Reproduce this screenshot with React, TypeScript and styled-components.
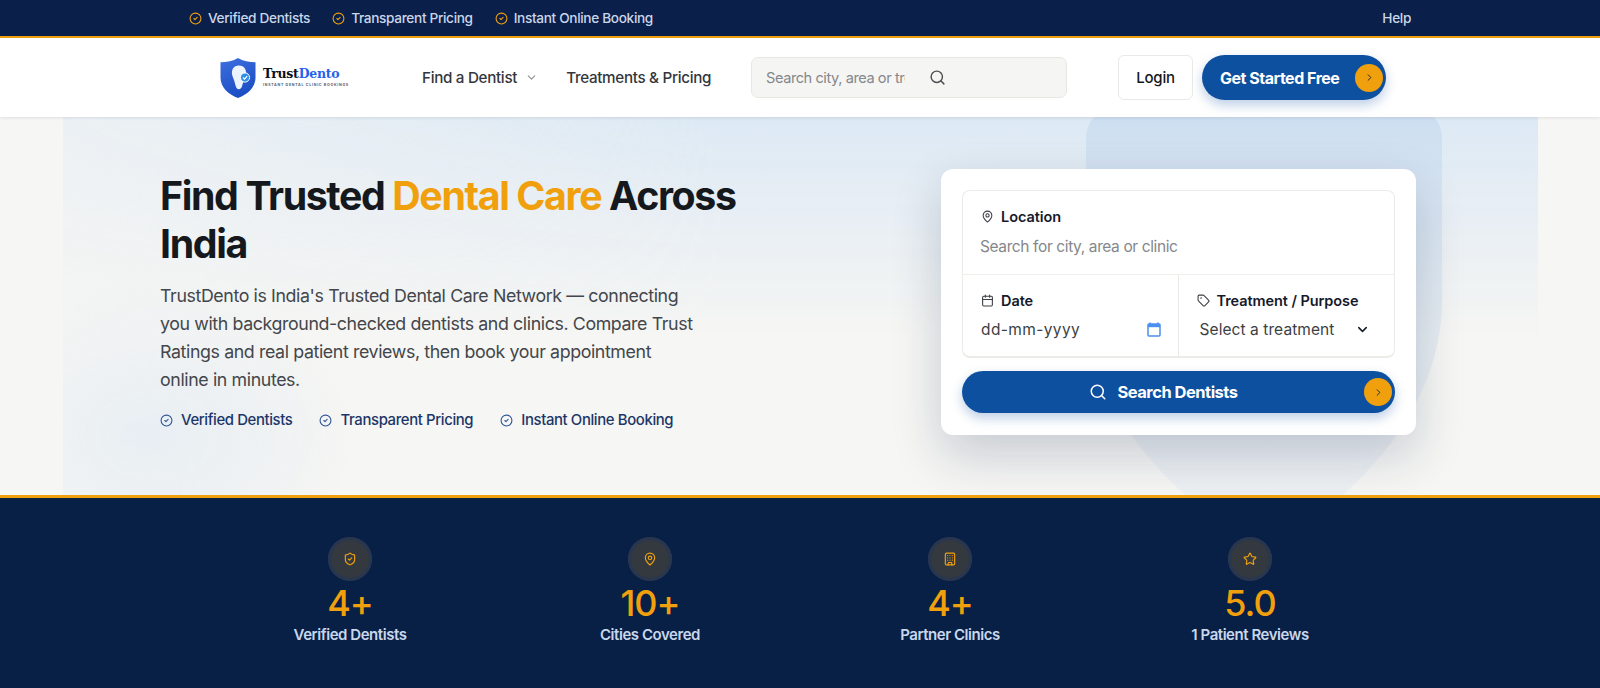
import React from "react";
import styled, { createGlobalStyle } from "styled-components";
import {
  Building,
  Calendar,
  ChevronDown,
  ChevronRight,
  CircleCheck,
  MapPin,
  Search,
  ShieldCheck,
  Star,
  Tag,
} from "lucide-react";

const NAVY = "#0a1f49";
const BLUE = "#0e50a0";
const AMBER = "#f0a00c";

const GlobalStyle = createGlobalStyle`
  html, body { margin: 0; padding: 0; background: #fff; }
  * { box-sizing: border-box; }
  body { font-family: Inter, "Liberation Sans", sans-serif; }
`;

const Page = styled.div`
  width: 1600px;
  height: 688px;
  overflow: hidden;
`;

const TopBar = styled.div`
  height: 38px;
  background: ${NAVY};
  border-bottom: 2px solid ${AMBER};
  padding: 0 189px;
  display: flex;
  align-items: center;
  justify-content: space-between;
  color: #c9d6ea;
  font-size: 13.65px;
  font-weight: 500;
  letter-spacing: -0.025em;
`;

const TopList = styled.div`
  display: flex;
  gap: 22px;
`;

const TopItem = styled.span`
  display: flex;
  align-items: center;
  gap: 6px;
  svg { color: ${AMBER}; }
`;

const Header = styled.header`
  position: relative;
  z-index: 2;
  height: 79px;
  background: #fff;
  box-shadow: 0 1px 3px rgba(20, 30, 60, 0.1);
  padding: 0 214px 0 220px;
  display: flex;
  align-items: center;
`;

const Logo = styled.div`
  display: flex;
  align-items: center;
  gap: 7px;
  width: 202px;
`;

const WordBlock = styled.div`
  display: flex;
  flex-direction: column;
  gap: 2px;
`;

const Word = styled.div`
  font-family: "DejaVu Serif", serif;
  font-weight: 700;
  font-size: 12.5px;
  line-height: 14px;
  letter-spacing: -0.02em;
  color: #0c0f1a;
  span { color: #2563eb; }
`;

const Tagline = styled.div`
  font-size: 3.6px;
  line-height: 5px;
  font-weight: 700;
  letter-spacing: 0.2em;
  color: #555c6e;
  white-space: nowrap;
`;

const NavLinks = styled.nav`
  display: flex;
  align-items: center;
  gap: 28px;
  width: 329px;
  font-size: 15.2px;
  font-weight: 450;
  letter-spacing: -0.02em;
  color: #33363c;
`;

const NavLink = styled.a`
  display: flex;
  align-items: center;
  gap: 8px;
  svg { color: #8d9097; }
`;

const NavSearch = styled.div`
  width: 316px;
  height: 41px;
  background: #f5f5f3;
  border: 1px solid #e8e8e3;
  border-radius: 7px;
  padding: 0 14px;
  display: flex;
  align-items: center;
  gap: 24px;
  color: #4b4d50;
`;

const NavSearchInput = styled.input`
  width: 139px;
  border: 0;
  outline: 0;
  padding: 0;
  background: none;
  font: 400 14.6px Inter, sans-serif;
  letter-spacing: -0.03em;
  &::placeholder { color: #85878a; opacity: 1; }
`;

const HeaderActions = styled.div`
  margin-left: auto;
  display: flex;
  gap: 9px;
`;

const LoginButton = styled.button`
  width: 75px;
  height: 45px;
  background: #fff;
  border: 1px solid #e9e9e6;
  border-radius: 6px;
  font: 500 15px Inter, sans-serif;
  letter-spacing: -0.015em;
  color: #15171c;
`;

const PillButton = styled.button<{ $full?: boolean }>`
  position: relative;
  width: ${(p) => (p.$full ? "100%" : "184px")};
  height: ${(p) => (p.$full ? "42px" : "45px")};
  border: 0;
  border-radius: 24px;
  background: ${BLUE};
  color: #fff;
  box-shadow: 0 5px 12px rgba(14, 80, 160, 0.28);
  font: 700 ${(p) => (p.$full ? "16.5px" : "16px")} Inter, sans-serif;
  letter-spacing: -0.03em;
  display: flex;
  align-items: center;
  justify-content: ${(p) => (p.$full ? "center" : "flex-start")};
  gap: 10px;
  padding: ${(p) => (p.$full ? "0 30px 0 0" : "0 0 0 18px")};
`;

const ArrowDot = styled.span`
  position: absolute;
  right: 3px;
  top: 50%;
  transform: translateY(-50%);
  width: 28px;
  height: 28px;
  border-radius: 50%;
  background: ${AMBER};
  color: #1a2030;
  display: flex;
  align-items: center;
  justify-content: center;
`;

const Hero = styled.section`
  position: relative;
  height: 378px;
  background: #f6f6f4;
  padding: 52px 184px 0 160px;
  display: flex;
  justify-content: space-between;
  overflow: hidden;

  &::before {
    content: "";
    position: absolute;
    top: 0;
    bottom: 0;
    left: 63px;
    width: 1475px;
    background:
      radial-gradient(300px 220px at 5% 84%, rgba(198, 220, 243, 0.6), transparent 72%),
      linear-gradient(180deg, rgba(196, 220, 245, 0.5), rgba(196, 220, 245, 0) 58%);
    mask-image: linear-gradient(90deg, rgba(0, 0, 0, 0.4), #000 45%);
  }
`;

const HeroShield = styled.svg`
  position: absolute;
  left: 1086px;
  top: -7px;
  width: 356px;
  height: 440px;
`;

const HeroCopy = styled.div`
  position: relative;
  width: 600px;
  padding-top: 3px;
`;

const Title = styled.h1`
  margin: 0 0 14px;
  font-size: 39.3px;
  line-height: 48px;
  font-weight: 700;
  letter-spacing: -0.035em;
  color: #15181c;
  em { font-style: normal; color: ${AMBER}; }
`;

const Lead = styled.p`
  margin: 0 0 17px;
  width: 538px;
  font-size: 17.8px;
  line-height: 28px;
  letter-spacing: -0.022em;
  color: #43464b;
`;

const Perks = styled.div`
  display: flex;
  gap: 27px;
  font-size: 14.9px;
  font-weight: 500;
  letter-spacing: -0.025em;
  color: #1c3669;
`;

const Perk = styled.span`
  display: flex;
  align-items: center;
  gap: 8px;
  svg { color: #2f5597; }
`;

const BookingCard = styled.form`
  position: relative;
  width: 475px;
  height: 266px;
  background: #fff;
  border-radius: 12px;
  padding: 21px;
  box-shadow: 0 20px 50px rgba(12, 32, 70, 0.2);
`;

const Fields = styled.div`
  height: 168px;
  border: 1px solid #ebebe8;
  border-bottom-width: 2px;
  border-radius: 8px;
  margin-bottom: 13px;
  display: grid;
  grid-template-columns: 1fr 1fr;
  grid-template-rows: 84px 1fr;
`;

const Field = styled.div<{ $wide?: boolean; $divided?: boolean }>`
  grid-column: ${(p) => (p.$wide ? "1 / 3" : "auto")};
  padding: 15px 17px 0;
  border-bottom: ${(p) => (p.$wide ? "1.5px solid #efefec" : "0")};
  border-right: ${(p) => (p.$divided ? "1px solid #ebebe8" : "0")};
`;

const FieldLabel = styled.label`
  display: flex;
  align-items: center;
  gap: 7px;
  height: 20px;
  margin-bottom: 8px;
  font-size: 14.5px;
  font-weight: 600;
  letter-spacing: -0.005em;
  color: #15192a;
  svg { color: #3b3e44; margin-left: 1px; }
`;

const FieldInput = styled.input`
  width: 100%;
  margin-top: 2px;
  border: 0;
  outline: 0;
  padding: 0;
  background: none;
  font: 400 15.5px Inter, sans-serif;
  letter-spacing: -0.025em;
  line-height: 22px;
  &::placeholder { color: #85878a; opacity: 1; }
`;

const FieldValue = styled.div<{ $indent?: number; $spaced?: boolean }>`
  display: flex;
  align-items: center;
  justify-content: space-between;
  height: 22px;
  padding: 0 ${(p) => (p.$spaced ? "0" : "7px")} 0 ${(p) => p.$indent ?? 1}px;
  font-size: 15.5px;
  letter-spacing: ${(p) => (p.$spaced ? "0.025em" : "0.005em")};
  color: #3c3f44;
`;

const Stats = styled.section`
  height: 193px;
  background: #081f46;
  border-top: 3px solid ${AMBER};
  padding: 39px 200px 0;
  display: grid;
  grid-template-columns: repeat(4, 1fr);
  align-items: start;
`;

const Stat = styled.div`
  display: flex;
  flex-direction: column;
  align-items: center;
`;

const StatIcon = styled.span`
  width: 44px;
  height: 44px;
  border-radius: 50%;
  background: #33393f;
  box-shadow: inset 0 0 0 3px #283650;
  color: ${AMBER};
  display: flex;
  align-items: center;
  justify-content: center;
`;

const StatValue = styled.div`
  font-size: 36px;
  line-height: 44px;
  font-weight: 550;
  letter-spacing: -0.03em;
  color: ${AMBER};
`;

const StatLabel = styled.div`
  font-size: 15px;
  line-height: 20px;
  font-weight: 600;
  letter-spacing: -0.03em;
  color: #c9d7ec;
`;

const LogoMark = () => (
  <svg width="36" height="42" viewBox="0 0 36 41">
    <defs>
      <linearGradient id="logoShield" x1="0" y1="0" x2="0.4" y2="1">
        <stop offset="0" stopColor="#3f6fe0" />
        <stop offset="1" stopColor="#1c4fc4" />
      </linearGradient>
    </defs>
    <path
      d="M18 0.5 C23 3.5 29 4.5 35.5 4.8 V20 C35.5 30 28 36.5 18 40.5 C8 36.5 0.5 30 0.5 20 V4.8 C7 4.5 13 3.5 18 0.5Z"
      fill="url(#logoShield)"
    />
    <path
      d="M18 8 C23 7.5 26.5 11 26 16 C25.6 20 23.5 23 22.5 27 C21.5 32 18.5 33 16.5 30.5 C15 28 15 24 13 20 C10.5 14 12.5 8.5 18 8Z"
      fill="#eef4fd"
    />
    <circle cx="25" cy="20" r="4.6" fill="#2f8fe8" stroke="#fff" strokeWidth="1" />
    <path d="M23 20 L24.5 21.6 L27.2 18.6" fill="none" stroke="#fff" strokeWidth="1.2" />
  </svg>
);

// the browser's own date-picker glyph, solid header bar
const PickerIcon = () => (
  <svg width="14" height="15" viewBox="0 0 14 15">
    <path d="M3 0.5 V2 M11 0.5 V2" stroke="#4a90f0" strokeWidth="1.6" />
    <rect x="1" y="2" width="12" height="12" rx="1" fill="none" stroke="#4a90f0" strokeWidth="1.5" />
    <rect x="1" y="2" width="12" height="3.2" fill="#4a90f0" />
  </svg>
);

const perks = ["Verified Dentists", "Transparent Pricing", "Instant Online Booking"];

const stats = [
  { icon: ShieldCheck, value: "4+", label: "Verified Dentists" },
  { icon: MapPin, value: "10+", label: "Cities Covered" },
  { icon: Building, value: "4+", label: "Partner Clinics" },
  { icon: Star, value: "5.0", label: "1 Patient Reviews" },
];

export default function App() {
  return (
    <Page>
      <GlobalStyle />
      <TopBar>
        <TopList>
          {perks.map((p) => (
            <TopItem key={p}>
              <CircleCheck size={13} />
              {p}
            </TopItem>
          ))}
        </TopList>
        <span>Help</span>
      </TopBar>
      <Header>
        <Logo>
          <LogoMark />
          <WordBlock>
            <Word>
              Trust<span>Dento</span>
            </Word>
            <Tagline>INSTANT DENTAL CLINIC BOOKINGS</Tagline>
          </WordBlock>
        </Logo>
        <NavLinks>
          <NavLink>
            Find a Dentist
            <ChevronDown size={13} />
          </NavLink>
          <NavLink>Treatments &amp; Pricing</NavLink>
        </NavLinks>
        <NavSearch>
          <NavSearchInput readOnly placeholder="Search city, area or treatment" />
          <Search size={17} />
        </NavSearch>
        <HeaderActions>
          <LoginButton>Login</LoginButton>
          <PillButton>
            Get Started Free
            <ArrowDot>
              <ChevronRight size={11} />
            </ArrowDot>
          </PillButton>
        </HeaderActions>
      </Header>
      <Hero>
        <HeroShield viewBox="0 0 356 440">
          <defs>
            <linearGradient id="heroShield" x1="0" y1="0" x2="0" y2="1">
              <stop offset="0" stopColor="#a9c6e8" stopOpacity="0.3" />
              <stop offset="0.6" stopColor="#a9c6e8" stopOpacity="0.18" />
              <stop offset="1" stopColor="#a9c6e8" stopOpacity="0.08" />
            </linearGradient>
          </defs>
          <path
            d="M30 0 H326 Q356 0 356 30 V190 C356 300 270 390 178 440 C86 390 0 300 0 190 V30 Q0 0 30 0Z"
            fill="url(#heroShield)"
          />
        </HeroShield>
        <HeroCopy>
          <Title>
            Find Trusted <em>Dental Care</em> Across India
          </Title>
          <Lead>
            TrustDento is India's Trusted Dental Care Network — connecting you with
            background-checked dentists and clinics. Compare Trust Ratings and real patient
            reviews, then book your appointment online in minutes.
          </Lead>
          <Perks>
            {perks.map((p) => (
              <Perk key={p}>
                <CircleCheck size={13} />
                {p}
              </Perk>
            ))}
          </Perks>
        </HeroCopy>
        <BookingCard>
          <Fields>
            <Field $wide>
              <FieldLabel>
                <MapPin size={13} />
                Location
              </FieldLabel>
              <FieldInput readOnly placeholder="Search for city, area or clinic" />
            </Field>
            <Field $divided>
              <FieldLabel>
                <Calendar size={13} />
                Date
              </FieldLabel>
              <FieldValue $spaced>
                dd-mm-yyyy
                <PickerIcon />
              </FieldValue>
            </Field>
            <Field>
              <FieldLabel>
                <Tag size={13} />
                Treatment / Purpose
              </FieldLabel>
              <FieldValue $indent={4}>
                Select a treatment
                <ChevronDown size={15} color="#15192a" strokeWidth={2.4} />
              </FieldValue>
            </Field>
          </Fields>
          <PillButton $full>
            <Search size={18} />
            Search Dentists
            <ArrowDot>
              <ChevronRight size={11} />
            </ArrowDot>
          </PillButton>
        </BookingCard>
      </Hero>
      <Stats>
        {stats.map((s) => (
          <Stat key={s.label}>
            <StatIcon>
              <s.icon size={14} />
            </StatIcon>
            <StatValue>{s.value}</StatValue>
            <StatLabel>{s.label}</StatLabel>
          </Stat>
        ))}
      </Stats>
    </Page>
  );
}
